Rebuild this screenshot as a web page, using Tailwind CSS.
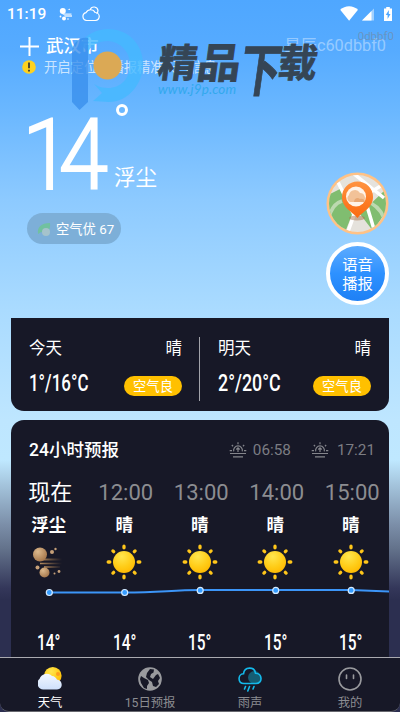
<!DOCTYPE html>
<html lang="zh">
<head>
<meta charset="utf-8">
<title>天气</title>
<script src="https://cdn.jsdelivr.net/npm/@tailwindcss/browser@4"></script>
</head>
<body class="w-[400px] h-[712px] overflow-hidden">
<svg width="0" height="0" class="absolute">
  <defs>
    <radialGradient id="sunFill" cx=".4" cy=".25" r=".8"><stop offset="0" stop-color="#ffe64f"/><stop offset=".6" stop-color="#ffcc17"/><stop offset="1" stop-color="#ffb800"/></radialGradient>
    <linearGradient id="cloudFill" x1="0" y1="0" x2="0" y2="1"><stop offset="0" stop-color="#f2f7ff"/><stop offset="1" stop-color="#cfe0fb"/></linearGradient>
    <radialGradient id="dust" cx=".35" cy=".3" r=".8"><stop offset="0" stop-color="#dcb98d"/><stop offset="1" stop-color="#a07146"/></radialGradient>
    <linearGradient id="wind" gradientUnits="userSpaceOnUse" x1="6" y1="0" x2="30" y2="0"><stop offset="0" stop-color="#c79b68"/><stop offset="1" stop-color="#a8794a" stop-opacity="0"/></linearGradient>
    <linearGradient id="pin" x1="0" y1="0" x2="0" y2="1"><stop offset="0" stop-color="#ff9340"/><stop offset="1" stop-color="#fb6a10"/></linearGradient>
    <symbol id="sun" viewBox="0 0 36 36">
      <g stroke="#ffc61a" stroke-width="3.3" stroke-linecap="round"><path d="M18 2.200v1.600M18 32.200v1.600M2.200 18h1.600M32.200 18h1.600M6.900 6.900l.8.8M28.300 28.300l.8.800M29.100 6.900l-.8.8M7.700 28.300l-.8.800"/></g>
      <circle cx="18" cy="18" r="11" fill="url(#sunFill)"/>
    </symbol>
    <symbol id="horizon" viewBox="0 0 18 16">
      <g fill="none" stroke="#85868c" stroke-width="1.200"><path d="M.7 8.600h2.300M15 8.600h2.300M9 .2v2M2.800 3l1.300 1.200M15.200 3l-1.300 1.200M4.700 9.300a4.400 4.400 0 1 1 8.600 0M9 10V6M7.300 7.500 9 5.800l1.700 1.700M1 11.500h16M4 14.800h10"/></g>
    </symbol>
  </defs>
</svg>
<div class="relative flex h-[712px] w-[400px] flex-col overflow-hidden font-[Roboto,'Noto_Sans_CJK_SC',sans-serif] text-white bg-[linear-gradient(180deg,#4fa7ff_0px,#56abff_50px,#6ab7ff_110px,#8dcaff_200px,#aadbff_310px,#bee6ff_420px,#bfe8ff_460px,#a4c4dc_485px,#7b8ea8_525px,#64738c_548px,#34375a_588px,#2c2f50_600px)]">

  <header class="flex h-[28px] shrink-0 items-center pl-[7px] pr-[8px]">
    <span class="w-[52px] text-[15.500px] font-medium leading-[28px]">11:19</span>
    <svg width="13" height="15" viewBox="0 0 13 15" fill="#fff"><circle cx="3.800" cy="4" r="3"/><circle cx="5" cy="11.500" r="2"/><circle cx="1.500" cy="9.500" r=".9"/><circle cx="9" cy="12" r=".8"/><path d="M3 6.500h9.500v1.200H4zM5 8.300h8v1.500H6zM8.500 3l2.500-1.500v1.500z" opacity=".85"/></svg>
    <svg class="ml-[10px]" width="18" height="16" viewBox="0 0 18 16" fill="none" stroke="#fff" stroke-width="1.200"><path d="M4.700 14.500a4 4 0 0 1-.6-7.900 5 5 0 0 1 9-.1 4 4 0 0 1 .3 8zM8.200 3.800A4 4 0 0 1 16 4.600c0 1.400-.6 2.500-1.500 3.200"/></svg>
    <svg class="ml-auto" width="52" height="16" viewBox="0 0 52 16"><path fill="#fff" d="M.2 3.700a13 13 0 0 1 17.800 0L9.100 14.700z"/><path fill="#a1d1ff" d="M34 2.500v12H22z"/><path fill="#fff" d="M31.500 5v9.500H22z"/><path fill="#fff" d="M44 2.500h2.200V1h3.600v1.500H52v12.500h-8z"/><path fill="#4fa7ff" d="M48.800 4 45.800 9h1.800v4l2.900-5h-1.700z"/></svg>
  </header>

  <section class="relative h-[290px] shrink-0">
    <div class="flex h-[30px] items-center pt-[6px] pl-[20px] pr-[14px]">
      <svg width="19" height="19" viewBox="0 0 19 19" stroke="#fff" stroke-width="2"><path d="M9.500 0v19M0 9.500h19"/></svg>
      <h1 class="ml-[7px] text-[17.500px] font-medium leading-6">武汉市</h1>
      <span class="ml-auto text-[16.300px] leading-6 text-white/40">星辰c60dbbf0</span>
    </div>
    <div class="flex h-[18px] items-center pl-[22px]">
      <svg width="14" height="14" viewBox="0 0 14 14"><circle cx="7" cy="7" r="6.800" fill="#ffd21f"/><path d="M7 2.500v5.800M7 9.800v1.800" stroke="#333" stroke-width="1.700"/></svg>
      <span class="ml-[8px] whitespace-nowrap pt-[2px] text-[13.300px] leading-[18px] text-white/70">开启定位，播报精准天气信息</span>
    </div>

    <div class="flex h-[126px] pl-[22px]">
      <div class="flex w-[92px] items-start pt-[29px]"><span class="inline-block w-[92px] origin-left scale-x-[.9] text-[99px] font-light leading-[100px] tracking-[-14px] [-webkit-text-stroke:1.8px_white]">14</span></div>
      <span class="mt-[28px] ml-[2px] size-[12px] shrink-0 rounded-full border-[3px] border-white"></span>
      <span class="-ml-[14px] mt-[87px] text-[21.500px] leading-[30px]">浮尘</span>
    </div>
    <div class="mt-[11px] ml-[27px] flex h-[31px] w-[94px] items-center rounded-full bg-[#7dafd8] pl-[9px]">
      <svg width="16" height="16" viewBox="0 0 16 16"><path d="M2 13c-1-7 3-11 12-11 1 7-3 11-9 9z" fill="#71c1a0"/><circle cx="10" cy="11" r="4" fill="#a5c3cc"/></svg>
      <span class="ml-[4px] whitespace-nowrap pt-[3px] text-[13.300px] leading-[20px]">空气优 67</span>
    </div>

    <div class="absolute right-[11px] top-[144px] flex w-[63px] flex-col items-center gap-[7px]">
      <svg width="63" height="63" viewBox="0 0 63 63">
        <defs><clipPath id="mapClip"><circle cx="31.500" cy="31.500" r="28.500"/></clipPath></defs>
        <circle cx="31.500" cy="31.500" r="31" fill="#ffc286"/>
        <g clip-path="url(#mapClip)"><rect width="63" height="63" fill="#e5e2dc"/>
          <path d="M0 24 14 17 27 40 18 63H0zM34 42l24-23 5 16-16 24z" fill="#80bd70"/>
          <path d="M12 10l16 33-8 22M28 2l30 24M41 34l9 30M38 24 58 12" stroke="#fff" stroke-width="3.500" fill="none"/><path d="M3 46Q6 32 16 29M38 28q15 5 20 18" stroke="#bcd9b0" stroke-width="3.500" fill="none"/></g>
        <ellipse cx="31" cy="46" rx="8" ry="2.500" fill="#a9744b" opacity=".5"/>
        <path d="M31.500 46C27 40 16 36 16 25a15.500 15.500 0 0 1 31 0c0 11-11 15-15.500 21z" fill="url(#pin)"/>
        <circle cx="30" cy="24.500" r="10" fill="#fff4e9"/>
        <path d="M24 30a4 4 0 0 1-1-7 6 6 0 0 1 11-2 5 5 0 0 1 3 9z" fill="#f2c298"/><path d="M28 30c0-4 4-5 6-3 3-1 5 1 5 3z" fill="#e8a874"/>
      </svg>
      <div class="flex size-[63px] flex-col items-center justify-center rounded-full border-[4px] border-white bg-linear-to-b from-[#5babff] via-[#2d91ff] to-[#1e80f5] pt-[3px] text-[15.300px] leading-[19px]"><span>语音</span><span>播报</span></div>
    </div>

    <svg class="absolute left-[70px] top-0" width="75" height="84" viewBox="0 0 75 84">
      <path d="M10 16C16 6 28 1 38 1c20 0 35 15 35 35S58 74 39 74c-6 0-11-1-16-1l9-8-8-9c5 3 9 4 14 4 13 0 22-10 22-23S51 14 38 13c-10 0-16 4-20 11z" fill="#45b9ff" opacity=".8"/>
      <path d="M2 24C2 15 10 8 18 10v64l-8.500 8L2 74z" fill="#388eec" opacity=".78"/>
      <circle cx="37.500" cy="37.500" r="14" fill="#dba955"/>
    </svg>
    <svg class="absolute left-[150px] top-[10px] overflow-visible" width="180" height="65" viewBox="0 0 180 65">
      <g fill="#354555" stroke="#354555" stroke-width=".8" font-family="'Noto Sans CJK SC', sans-serif" font-weight="700" transform="translate(7 0) skewX(-8)">
        <text x="5" y="39" font-size="39">精</text><text transform="translate(44 40) scale(1.120 1.060)" font-size="39">品</text><text transform="translate(88 53) scale(.8 1.120)" font-size="51">下</text><text x="125" y="39" font-size="39">载</text>
      </g>
      <text x="8" y="56" font-family="Lato, sans-serif" font-style="italic" font-size="13.500" textLength="78" fill="#32a9ed">www.j9p.com</text>
    </svg>
    <span class="absolute right-[6px] top-px text-[11.500px] leading-[14px] text-[#718ba7]/70">0dbbf0</span>
  </section>

  <section class="mx-[11px] flex h-[93px] shrink-0 rounded-b-[13px] bg-[#171827] px-[18px] pt-[19px]">
    <div class="flex h-[64px] w-[171px] flex-col border-r border-[#a2a3aa] pr-[17px]">
      <div class="flex h-[20px] justify-between pt-[2px] text-[16.500px] leading-[20px]"><span>今天</span><span>晴</span></div>
      <div class="mt-[14px] flex h-[24px] items-center justify-between"><span class="inline-block w-[60px] origin-left scale-x-[.72] whitespace-nowrap text-[23.500px] font-medium leading-[24px]">1°/16°C</span><span class="mt-[5px] flex h-[20px] w-[58px] items-center justify-center rounded-full bg-[#ffc000] pt-[2px] text-[13.300px] leading-[20px]">空气良</span></div>
    </div>
    <div class="flex flex-1 flex-col pl-[18px]">
      <div class="flex h-[20px] justify-between pt-[2px] text-[16.500px] leading-[20px]"><span>明天</span><span>晴</span></div>
      <div class="mt-[14px] flex h-[24px] items-center justify-between"><span class="inline-block w-[60px] origin-left scale-x-[.76] whitespace-nowrap text-[23.500px] font-medium leading-[24px]">2°/20°C</span><span class="mt-[5px] flex h-[20px] w-[58px] items-center justify-center rounded-full bg-[#ffc000] pt-[2px] text-[13.300px] leading-[20px]">空气良</span></div>
    </div>
  </section>

  <section class="mx-[11px] mt-[9px] flex h-[237px] shrink-0 flex-col overflow-hidden rounded-t-[13px] bg-[#171827]">
    <div class="flex h-[60px] items-center pl-[18px] pr-[14px] pt-[2px]">
      <h2 class="text-[17.500px] font-medium leading-6">24小时预报</h2>
      <div class="ml-auto flex items-center text-[15.300px] leading-5 text-[#7c7d83]">
        <svg width="18" height="16"><use href="#horizon"/></svg><span class="ml-[6px]">06:58</span>
        <svg class="ml-[20px]" width="18" height="16"><use href="#horizon"/></svg><span class="ml-[8px]">17:21</span>
      </div>
    </div>
    <div class="grid w-[378px] shrink-0 grid-cols-[repeat(5,75.500px)] pl-[1.500px] pt-px text-center text-[22px] leading-[28px] text-[#8c8d91]"><span class="text-white">现在</span><span>12:00</span><span>13:00</span><span>14:00</span><span>15:00</span></div>
    <div class="mt-[6px] grid grid-cols-[repeat(5,75.500px)] text-center text-[17.500px] font-bold leading-[24px]"><span>浮尘</span><span>晴</span><span>晴</span><span>晴</span><span>晴</span></div>
    <div class="mt-[7px] grid grid-cols-[repeat(5,75.500px)] justify-items-center">
      <svg class="-ml-[2px]" width="32" height="36" viewBox="0 0 32 36"><path d="M12 14.500h18v2H9zM8 18.800h22v1.400H8zM12 22h16v2H12z" fill="url(#wind)"/><circle cx="8" cy="10.500" r="7" fill="url(#dust)"/><circle cx="12.500" cy="28.500" r="5" fill="url(#dust)"/><g fill="#c6a079"><circle cx="20" cy="8" r="2"/><circle cx="23.500" cy="5" r="1.200"/><circle cx="5.500" cy="23.500" r="2"/><circle cx="22.500" cy="29.500" r="1"/><circle cx="27" cy="27.500" r="1.400"/></g></svg>
      <svg width="36" height="36"><use href="#sun"/></svg><svg width="36" height="36"><use href="#sun"/></svg><svg width="36" height="36"><use href="#sun"/></svg><svg width="36" height="36"><use href="#sun"/></svg>
    </div>
    <svg class="shrink-0" width="378" height="20" viewBox="0 0 378 20"><path d="M38.300 12.500H113.500C150 12.500 160 10 189 10H340L380 11.700" fill="none" stroke="#3c95f8" stroke-width="2"/><g fill="#359cff" stroke="#d4eaff" stroke-width="1.200"><circle cx="38.300" cy="12.500" r="3"/><circle cx="113.700" cy="12.500" r="3"/><circle cx="189.200" cy="10.400" r="3"/><circle cx="264.700" cy="10.400" r="3"/><circle cx="340.200" cy="10.400" r="3"/></g></svg>
    <div class="mt-[29px] grid grid-cols-[repeat(5,75.500px)] text-center text-[22px] font-medium leading-[28px] [&>span]:scale-x-[.7]"><span>14°</span><span>14°</span><span>15°</span><span>15°</span><span>15°</span></div>
  </section>

  <nav class="grid h-[55px] shrink-0 grid-cols-4 rounded-b-[9px] border-t border-b border-t-[#aaaab0] border-b-[#67686f] bg-[#171827] pt-[9px] text-center text-[12.300px] leading-[16px] text-[#8b8c91] [&>div]:flex [&>div]:flex-col [&>div]:items-center">
    <div class="text-white"><svg width="24" height="24" viewBox="0 0 24 24"><circle cx="14.800" cy="8.800" r="8.800" fill="url(#sunFill)"/><circle cx="20" cy="7" r="2" fill="#ff9c1c"/><path d="M6 22.500A6 6 0 0 1 1.500 12 7.500 7.500 0 0 1 14 9a6 6 0 0 1 5 3.800c6 0 6.500 9.700 0 9.700z" fill="url(#cloudFill)"/></svg><span class="mt-[4px]">天气</span></div>
    <div><svg width="24" height="24" viewBox="0 0 24 24"><circle cx="12" cy="12" r="11.800" fill="#999a9e"/><path d="M12 2l4 .5-.5 3L13 7l-1 3 3 2 3-4 2-1 2 4-2 3 1 3-3 3-3-1-1-4-3-2-3-3 1-4zM3 9l3 2 4 2 1 3-2 3 0 3-3-1-3-5-1-4z" fill="#171827"/></svg><span class="mt-[4px]">15日预报</span></div>
    <div><svg width="24" height="25" viewBox="0 0 24 25" fill="none" stroke="#14b9ea" stroke-width="1.600" stroke-linecap="round"><circle cx="16.500" cy="10.500" r="6.500" fill="#155d73" stroke="none"/><path d="M6 16.500c-6.500 0-6.500-9.500-.5-9.700.8-7.500 11-7.500 12-.6 7 0 7.500 10.300.5 10.300zM7.500 19.500l-1 2.500M11.500 19.500l-1.700 4.500M16 19.500l-1 2.500"/></svg><span class="mt-[3px]">雨声</span></div>
    <div><svg width="24" height="24" viewBox="0 0 24 24" fill="none" stroke="#999a9e" stroke-width="1.600"><circle cx="12" cy="12" r="11"/><path d="M8.500 8v3.500M15.500 8v3.500" stroke-linecap="round"/></svg><span class="mt-[4px]">我的</span></div>
  </nav>
</div>
</body>
</html>
